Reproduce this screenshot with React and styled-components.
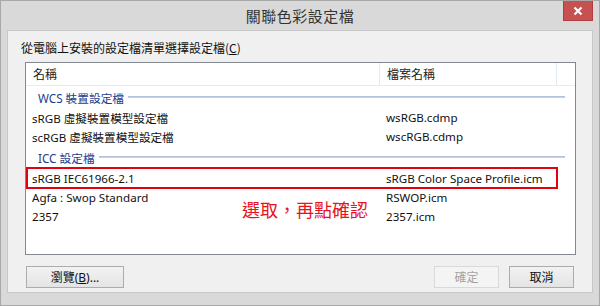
import React from "react";
import styled, { createGlobalStyle } from "styled-components";

const GlobalStyle = createGlobalStyle`
  html, body {
    margin: 0;
    padding: 0;
    background: #d9d9d9;
  }
  body {
    font-family: "Noto Sans", "Noto Sans CJK TC", sans-serif;
    font-size: 12px;
    color: #000;
  }
`;

const profiles = [
  { type: "group", label: "WCS 裝置設定檔" },
  { name: "sRGB 虛擬裝置模型設定檔", file: "wsRGB.cdmp" },
  { name: "scRGB 虛擬裝置模型設定檔", file: "wscRGB.cdmp" },
  { type: "group", label: "ICC 設定檔" },
  { name: "sRGB IEC61966-2.1", file: "sRGB Color Space Profile.icm", marked: true },
  { name: "Agfa : Swop Standard", file: "RSWOP.icm" },
  { name: "2357", file: "2357.icm" },
];

const App = () => {
  return (
    <Window>
      <GlobalStyle />
      <TitleBar>
        <span />
        <Title>關聯色彩設定檔</Title>
        <CloseButton>
          <svg width="10" height="10" viewBox="0 0 10 10">
            <path d="M1.5 1.5 L8.5 8.5 M8.5 1.5 L1.5 8.5" stroke="#fff" strokeWidth="2.2" />
          </svg>
        </CloseButton>
      </TitleBar>

      <Panel>
        <Prompt>
          從電腦上安裝的設定檔清單選擇設定檔(<u>C</u>)
        </Prompt>

        <ListBox>
          <HeaderRow>
            <HeaderCell>名稱</HeaderCell>
            <HeaderCell>檔案名稱</HeaderCell>
            <HeaderCell />
          </HeaderRow>

          {profiles.map((p, i) =>
            p.type === "group" ? (
              <GroupRow key={i}>
                <GroupLabel>{p.label}</GroupLabel>
                <GroupLine />
              </GroupRow>
            ) : (
              <Row key={i} $marked={p.marked}>
                <Cell>{p.name}</Cell>
                <Cell>{p.file}</Cell>
              </Row>
            )
          )}

          <Note>選取，再點確認</Note>
        </ListBox>

        <ButtonBar>
          <Button $wide>
            瀏覽(<u>B</u>)...
          </Button>
          <Spacer />
          <Button disabled>確定</Button>
          <Button>取消</Button>
        </ButtonBar>
      </Panel>
    </Window>
  );
};

//=================================
//       Styled-Component
//=================================

const Window = styled.div`
  box-sizing: border-box;
  width: 600px;
  height: 306px;
  border: 1px solid #a8a8a8;
  background: #d9d9d9;
  display: flex;
  flex-direction: column;
  padding: 0 6px 12px;
`;

const TitleBar = styled.div`
  height: 29px;
  display: grid;
  grid-template-columns: 1fr auto 1fr;
  align-items: start;
`;

const Title = styled.div`
  font-family: "Noto Sans CJK TC", sans-serif;
  font-size: 15px;
  color: #333;
  line-height: 30px;
  letter-spacing: 0.5px;
`;

const CloseButton = styled.div`
  justify-self: end;
  width: 30px;
  height: 20px;
  background: #c75050;
  border: 1px solid #b43c3c;
  border-top: none;
  box-sizing: border-box;
  display: flex;
  align-items: center;
  justify-content: center;
`;

const Panel = styled.div`
  flex: 1;
  background: #f0f0f0;
  border: 1px solid #c8c8c8;
  display: flex;
  flex-direction: column;
  padding: 0 16px 4px 17px;
`;

const Prompt = styled.div`
  margin: 8px 0 0 -4px;
  height: 23px;
  line-height: 18px;
  font-family: "Noto Sans CJK TC", sans-serif;
  font-size: 12px;
  color: #111;
`;

const ListBox = styled.div`
  position: relative;
  height: 193px;
  background: #fff;
  border: 1px solid #828790;
  box-sizing: border-box;
  overflow: hidden;
`;

const columns = `354px 177px 1fr`;

const HeaderRow = styled.div`
  display: grid;
  grid-template-columns: ${columns};
  height: 23px;
  border-bottom: 1px solid #e5ecf5;
  box-sizing: border-box;
`;

const HeaderCell = styled.div`
  border-right: 1px solid #e3eaf4;
  padding-left: 7px;
  line-height: 21px;
  font-family: "Noto Sans CJK TC", sans-serif;
  font-size: 12px;
  color: #222;
  &:last-child {
    border-right: none;
  }
`;

const GroupRow = styled.div`
  display: flex;
  align-items: center;
  height: 22px;
  padding: 0 10px 0 11px;
`;

const GroupLabel = styled.span`
  color: #1e3c8c;
  font-family: "Noto Sans", "Noto Sans CJK TC", sans-serif;
  font-size: 11.7px;
  white-space: nowrap;
  padding: 0 4px 0 1px;
`;

const GroupLine = styled.div`
  flex: 1;
  height: 2px;
  background: #c5d2e6;
  border-top: 1px solid #b3c3dd;
  box-sizing: border-box;
`;

const Row = styled.div`
  position: relative;
  display: grid;
  grid-template-columns: ${columns};
  height: 19px;
  align-items: center;
  ${({ $marked }) =>
    $marked &&
    `
    height: 20px;
    &::after {
      content: "";
      position: absolute;
      left: 0;
      top: -1px;
      width: 532px;
      bottom: -1px;
      border: 2px solid #e4000f;
      box-sizing: border-box;
    }
  `}
`;

const Cell = styled.div`
  padding-left: 6px;
  white-space: nowrap;
  font-size: 11.6px;
  color: #111;
`;

const Note = styled.div`
  position: absolute;
  left: 216px;
  top: 133px;
  font-family: "Noto Sans CJK TC", sans-serif;
  font-size: 18px;
  font-weight: 400;
  color: #e8141c;
`;

const ButtonBar = styled.div`
  display: flex;
  gap: 10px;
  margin-top: 11px;
  padding: 0 2px 0 1px;
`;

const Spacer = styled.div`
  flex: 1;
`;

const Button = styled.button`
  width: ${({ $wide }) => ($wide ? "98px" : "65px")};
  height: 22px;
  padding: 0;
  font-family: "Noto Sans", "Noto Sans CJK TC", sans-serif;
  font-size: 12px;
  color: #111;
  background: linear-gradient(#f2f2f2, #e4e4e4);
  border: 1px solid #acacac;
  border-radius: 0;
  &:disabled {
    color: #a3a3a3;
    background: #f4f4f4;
    border-color: #d9d9d9;
  }
  &:focus {
    outline: none;
  }
`;

export default App;
